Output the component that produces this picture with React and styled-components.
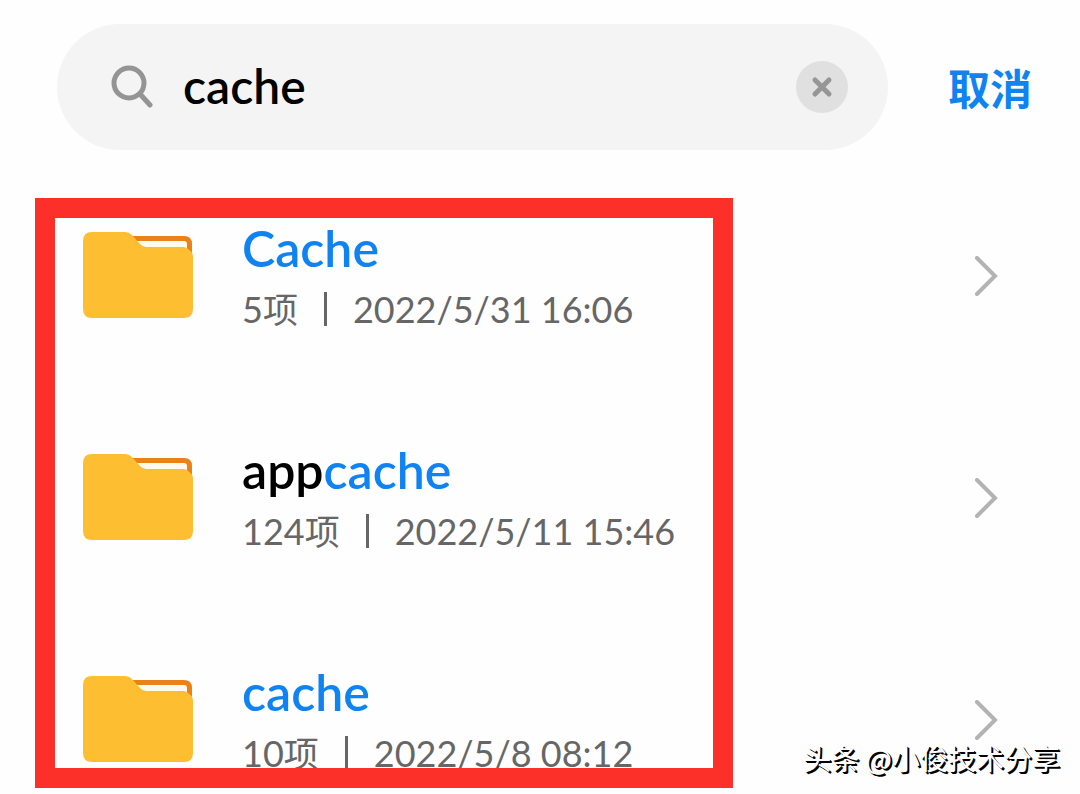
import React, { useState } from "react";
import styled, { createGlobalStyle } from "styled-components";

const GlobalStyle = createGlobalStyle`
  * { box-sizing: border-box; }
  body {
    margin: 0;
    background: #fefefe;
    color: #000;
    font-family: Lato, "Noto Sans CJK SC", sans-serif;
  }
`;

const Page = styled.main`
  position: relative;
  min-height: 100vh;
  overflow: hidden;
`;

const Header = styled.header`
  display: flex;
  align-items: center;
  gap: 60px;
  padding: 24px 48px 0 57px;
`;

const SearchBox = styled.form`
  flex: 1;
  min-width: 0;
  height: 126px;
  display: flex;
  align-items: center;
  padding: 0 40px 0 54px;
  border-radius: 63px;
  background: #f4f4f4;
`;

const SearchIcon = styled.svg`
  flex: none;
  width: 42px;
  height: 46px;
`;

const SearchInput = styled.input`
  flex: 1;
  min-width: 0;
  height: 60px;
  margin-left: 30px;
  padding: 0 0 4px;
  border: 0;
  outline: 0;
  background: transparent;
  color: #000;
  font: 600 48px Lato, "Noto Sans CJK SC", sans-serif;
`;

const ClearButton = styled.button`
  flex: none;
  width: 52px;
  height: 52px;
  padding: 0;
  border: 0;
  border-radius: 50%;
  background: #e0e0e0;

  svg {
    display: block;
    width: 52px;
    height: 52px;
  }
`;

const CancelButton = styled.button`
  flex: none;
  padding: 0;
  border: 0;
  background: transparent;
  color: #0f83f2;
  font: 700 42px/60px "Noto Sans CJK SC", sans-serif;
`;

const Results = styled.section`
  position: relative;
  margin-top: 48px;
  padding: 19px 82px 16px;
`;

const Highlight = styled.div`
  position: absolute;
  top: 0;
  left: 35px;
  width: 698px;
  height: 590px;
  border: 20px solid #fc3029;
  pointer-events: none;
`;

const FileList = styled.ul`
  display: flex;
  flex-direction: column;
  gap: 102px;
  margin: 0;
  padding: 0;
  list-style: none;
`;

const FileLink = styled.a`
  display: flex;
  align-items: center;
  height: 120px;
  color: inherit;
  text-decoration: none;
`;

const FolderIcon = styled.svg`
  flex: none;
  width: 112px;
  height: 92px;
`;

const FileText = styled.div`
  flex: 1;
  min-width: 0;
  margin-left: 48px;
`;

const FileName = styled.div`
  font-size: 50px;
  font-weight: 600;
  line-height: 64px;
`;

const Match = styled.span`
  color: #0f83f2;
`;

const Meta = styled.div`
  display: flex;
  align-items: center;
  color: #666;
  font-size: 36px;
  line-height: 58px;
  white-space: nowrap;
`;

const Unit = styled.span`
  font-size: 35px;
`;

const Divider = styled.span`
  width: 3px;
  height: 34px;
  margin: 0 26px;
  background: #666;
`;

const Chevron = styled.svg`
  flex: none;
  width: 24px;
  height: 42px;
`;

const Watermark = styled.div`
  position: absolute;
  right: 20px;
  bottom: 19px;
  color: #fff;
  font: 400 28px/40px "Noto Sans CJK SC", sans-serif;
  text-shadow: 1px 1px 0 #000, 2px 2px 0 #000;
  white-space: nowrap;
`;

const files = [
  { id: 1, prefix: "", match: "Cache", count: 5, date: "2022/5/31 16:06" },
  { id: 2, prefix: "app", match: "cache", count: 124, date: "2022/5/11 15:46" },
  { id: 3, prefix: "", match: "cache", count: 10, date: "2022/5/8 08:12" },
];

function Folder() {
  return (
    <FolderIcon viewBox="0 0 112 92" aria-hidden="true">
      <path d="M42 5h60q8 0 8 8v16H42z" fill="#e9821a" />
      <path d="M50 10h52q3 0 3 3v8l-5-3H56z" fill="#fffaf0" />
      <path
        d="M10 1h33q4 0 7 3l8 9q3 3 6 3h37q4 0 6 3 4 2 4 7v52q0 9-9 9H10q-9 0-9-9V10q0-9 9-9z"
        fill="#febe32"
      />
    </FolderIcon>
  );
}

function FileRow({ file }) {
  return (
    <li>
      <FileLink href="#">
        <Folder />
        <FileText>
          <FileName>
            {file.prefix}
            <Match>{file.match}</Match>
          </FileName>
          <Meta>
            <span>{file.count}</span>
            <Unit>项</Unit>
            <Divider />
            <span>{file.date}</span>
          </Meta>
        </FileText>
        <Chevron viewBox="0 0 24 42" aria-hidden="true">
          <path d="M3 2l18 18L3 38" fill="none" stroke="#b3b3b3" strokeWidth="4" strokeLinecap="round" />
        </Chevron>
      </FileLink>
    </li>
  );
}

export default function App() {
  const [query, setQuery] = useState("cache");
  return (
    <>
      <GlobalStyle />
      <Page>
        <Header>
          <SearchBox onSubmit={(e) => e.preventDefault()}>
            <SearchIcon viewBox="0 0 42 46" fill="none" stroke="#949494" aria-hidden="true">
              <circle cx="18" cy="19" r="15" strokeWidth="5" />
              <path d="M29 30l10 11" strokeWidth="5" strokeLinecap="round" />
            </SearchIcon>
            <SearchInput aria-label="搜索" value={query} onChange={(e) => setQuery(e.target.value)} />
            <ClearButton type="button" aria-label="清除" onClick={() => setQuery("")}>
              <svg viewBox="0 0 52 52" aria-hidden="true">
                <path d="M19 19l14 14M33 19L19 33" stroke="#969696" strokeWidth="5" strokeLinecap="round" />
              </svg>
            </ClearButton>
          </SearchBox>
          <CancelButton type="button">取消</CancelButton>
        </Header>
        <Results>
          <FileList>
            {files.map((file) => (
              <FileRow key={file.id} file={file} />
            ))}
          </FileList>
          <Highlight />
        </Results>
        <Watermark>头条 @小俊技术分享</Watermark>
      </Page>
    </>
  );
}
